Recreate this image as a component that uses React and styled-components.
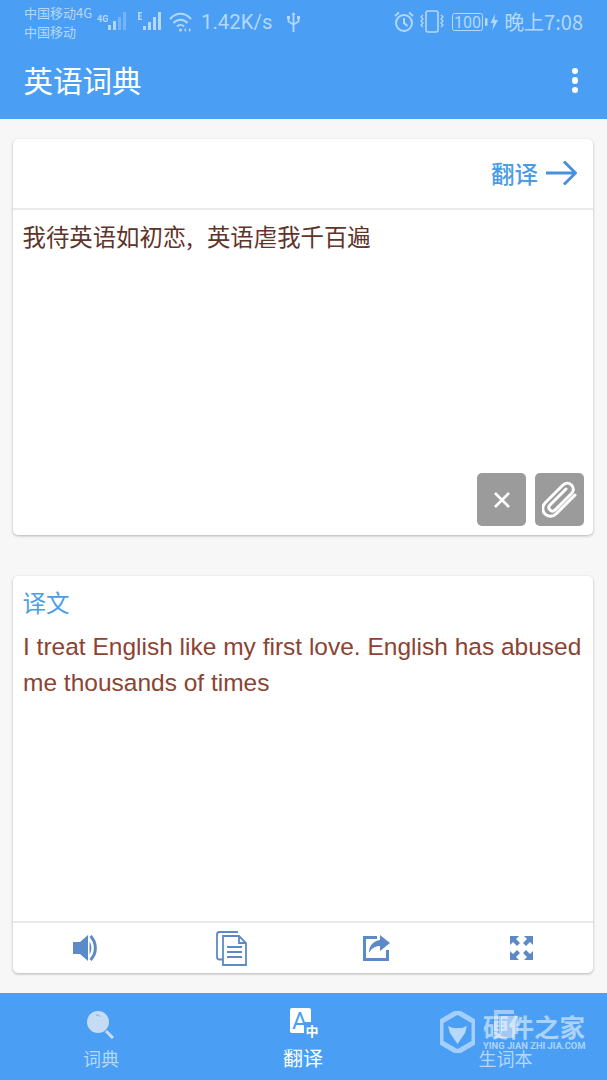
import React from 'react'
import styled, { createGlobalStyle } from 'styled-components'

const CJK = '"Noto Sans CJK SC", "Noto Sans", sans-serif'
const BLUE = '#4a9ff5'
const STATUS = '#b5d7fb'
const TOOL = '#5b8ac6'

const GlobalStyle = createGlobalStyle`
  html, body {
    margin: 0;
    padding: 0;
    background: #f7f7f7;
  }
  * {
    box-sizing: border-box;
  }
`

const Page = styled.div`
  position: relative;
  display: flex;
  flex-direction: column;
  width: 607px;
  height: 1080px;
  overflow: hidden;
  background: #f7f7f7;
  font-family: ${CJK};
`

const Header = styled.header`
  height: 119px;
  background: ${BLUE};
  display: flex;
  flex-direction: column;
`

const StatusBar = styled.div`
  height: 44px;
  padding: 0 24px;
  display: flex;
  justify-content: space-between;
  align-items: center;
  color: ${STATUS};
`

const StatusGroup = styled.div`
  display: flex;
  align-items: center;
`

const Carrier = styled.div`
  width: 73px;
  font-size: 13px;
  line-height: 19px;
  white-space: nowrap;
`

const StatusIcon = styled.svg`
  display: block;
  flex: none;
  margin-left: ${({ $gap }) => $gap}px;
`

const Speed = styled.span`
  margin-left: 9px;
  font: 20.4px Roboto, sans-serif;
  white-space: nowrap;
`

const Clock = styled.span`
  margin-left: 6px;
  font-size: 20px;
  line-height: 24px;
  white-space: nowrap;
`

const AppBar = styled.div`
  flex: 1;
  display: flex;
  justify-content: space-between;
  align-items: center;
  padding: 0 29px 0 23.5px;
  margin-top: -5px;
`

const AppTitle = styled.h1`
  margin: 0;
  font-size: 29.5px;
  font-weight: 400;
  line-height: 40px;
  color: #fff;
`

const MenuDots = styled.div`
  display: flex;
  flex-direction: column;
  gap: 3px;
  margin-top: 3px;

  i {
    display: block;
    width: 6.5px;
    height: 6.5px;
    border-radius: 50%;
    background: #fff;
  }
`

const Main = styled.main`
  flex: 1;
  padding: 20px 14px 20px 13px;
  display: flex;
  flex-direction: column;
  gap: 41px;
`

const Card = styled.section`
  height: ${({ $height }) => $height}px;
  background: #fff;
  border-radius: 5px;
  box-shadow: 0 1px 3px rgba(0, 0, 0, 0.28);
  display: flex;
  flex-direction: column;
`

const CardHead = styled.div`
  height: 71px;
  flex: none;
  border-bottom: 2px solid #e9e9e9;
  display: flex;
  justify-content: flex-end;
  align-items: center;
  padding: 0 16px 2px 0;
  gap: 8px;
`

const TranslateLabel = styled.span`
  font-size: 23.5px;
  font-weight: 500;
  color: #4a9be6;
`

const SourceBody = styled.div`
  flex: 1;
  display: flex;
  flex-direction: column;
  padding: 8px 9px 9px 9.5px;
`

const SourceText = styled.div`
  font-size: 23.4px;
  line-height: 36px;
  word-spacing: 9px;
  color: #5f3429;
  white-space: nowrap;
`

const ActionRow = styled.div`
  margin-top: auto;
  display: flex;
  justify-content: flex-end;
  gap: 9px;
`

const ActionButton = styled.div`
  width: 49px;
  height: 53px;
  border-radius: 5px;
  background: #9b9b9b;
  display: flex;
  align-items: center;
  justify-content: center;
`

const ResultBody = styled.div`
  flex: 1;
  padding: 8px 10px 0;
`

const ResultLabel = styled.div`
  font-size: 23.5px;
  line-height: 36px;
  margin-left: -0.5px;
  color: #4a9fe6;
`

const ResultText = styled.p`
  margin: 9px 0 0;
  font: 24.5px/36px "Liberation Sans", sans-serif;
  color: #8c4331;
`

const Toolbar = styled.div`
  height: 52px;
  flex: none;
  border-top: 2px solid #e9e9e9;
  display: grid;
  grid-template-columns: repeat(4, 145px);
  justify-content: center;
  justify-items: center;
  align-items: center;
`

const BottomNav = styled.nav`
  height: 87px;
  flex: none;
  background: ${BLUE};
  display: grid;
  grid-template-columns: 202px 202px 203px;
  justify-items: center;
`

const NavItem = styled.div`
  display: flex;
  flex-direction: column;
  align-items: center;
  padding-top: 14px;
  color: ${({ $active }) => ($active ? '#fff' : STATUS)};
  font-size: ${({ $active }) => ($active ? 20 : 18)}px;
  line-height: 26px;

  svg {
    display: block;
    margin-bottom: 6px;
  }
`

const Watermark = styled.div`
  position: absolute;
  left: 440px;
  top: 1011px;
  display: flex;
  align-items: flex-start;
  gap: 8px;
  color: rgba(255, 255, 255, 0.55);
`

const WatermarkText = styled.div`
  display: flex;
  flex-direction: column;
`

const WatermarkName = styled.span`
  font-size: 25.5px;
  font-weight: 700;
  line-height: 30px;
  white-space: nowrap;
`

const WatermarkSite = styled.span`
  font: 700 9.4px/12px Roboto, sans-serif;
  white-space: nowrap;
  margin-top: -1px;
`

function Signal({ dim = 0, gap }) {
  const bars = [
    [0, 5],
    [5, 9],
    [10, 13],
    [15, 18],
  ]
  return (
    <StatusIcon $gap={gap} width="19" height="24" viewBox="0 0 19 24" fill={STATUS}>
      {bars.map(([x, h], i) => (
        <rect key={x} x={x} y={20 - h} width="3" height={h} opacity={i >= 4 - dim ? 0.4 : 1} />
      ))}
    </StatusIcon>
  )
}

function StatusLeft() {
  return (
    <StatusGroup>
      <Carrier>
        中国移动4G
        <br />
        中国移动
      </Carrier>
      <StatusIcon $gap={0} width="11" height="24" viewBox="0 0 11 24">
        <text x="0" y="12" fontFamily="Roboto, sans-serif" fontWeight="700" fontSize="9" fill={STATUS}>4G</text>
      </StatusIcon>
      <Signal dim={2} gap={0} />
      <StatusIcon $gap={11} width="26" height="24" viewBox="0 0 26 24" fill={STATUS}>
        <rect x="0" y="2" width="1.500" height="8" />
        <rect x="0" y="2" width="4" height="1.500" />
        <rect x="0" y="5.300" width="3.500" height="1.400" />
        <rect x="0" y="8.500" width="4" height="1.500" />
        <rect x="5" y="16" width="3" height="4" />
        <rect x="10" y="12" width="3" height="8" />
        <rect x="15" y="7" width="3" height="13" />
        <rect x="20" y="2" width="3" height="18" />
      </StatusIcon>
      <StatusIcon $gap={5} width="23" height="22" viewBox="0 0 23 22" fill="none" stroke={STATUS} strokeWidth="2">
        <path d="M1 8c6-7 15-7 21 0" />
        <path d="M4.500 12c4-4.500 10-4.500 14 0" />
        <path d="M8 15.500c2-2 5-2 7 0" />
        <circle cx="11.500" cy="19" r="1.600" fill={STATUS} stroke="none" />
        <path d="M17 17l-2 2 2 2zM20 17l2 2-2 2z" fill={STATUS} stroke="none" />
      </StatusIcon>
      <Speed>1.42K/s</Speed>
      <StatusIcon $gap={13} width="15" height="22" viewBox="0 0 15 22" fill="none" stroke={STATUS} strokeWidth="1.800">
        <path d="M7.500 3v18" />
        <path d="M2.500 7v3.500l5 3 5-3V7" />
        <path d="M7.500 1l2 3h-4z" fill={STATUS} stroke="none" />
        <rect x="1" y="5" width="3" height="3" fill={STATUS} stroke="none" />
        <rect x="11" y="5" width="3" height="3" fill={STATUS} stroke="none" />
      </StatusIcon>
    </StatusGroup>
  )
}

function StatusRight() {
  return (
    <StatusGroup>
      <StatusIcon $gap={0} width="20" height="22" viewBox="0 0 20 22" fill="none" stroke={STATUS} strokeWidth="2">
        <circle cx="10" cy="12" r="8" />
        <path d="M10 7v5l3.500 3" />
        <path d="M1 5l4-3.500M19 5l-4-3.500" />
      </StatusIcon>
      <StatusIcon $gap={6} width="24" height="24" viewBox="0 0 24 24" fill="none" stroke={STATUS} strokeWidth="1.600">
        <rect x="6" y="1" width="12" height="21" rx="2" />
        <path d="M3 5l-2 2 2 2-2 2 2 2-2 2 2 2M21 5l2 2-2 2 2 2-2 2 2 2-2 2" strokeWidth="1.300" />
      </StatusIcon>
      <StatusIcon $gap={8} width="37" height="20" viewBox="0 0 37 20">
        <rect x="0.500" y="1.500" width="30" height="17" rx="2" fill="none" stroke={STATUS} />
        <text x="15.500" y="15.500" textAnchor="middle" fontFamily="Roboto, sans-serif" fontSize="16" fill={STATUS}>100</text>
        <rect x="33" y="6" width="2.500" height="8" rx="1" fill={STATUS} />
      </StatusIcon>
      <StatusIcon $gap={1} width="8" height="18" viewBox="0 0 8 18" fill={STATUS}>
        <path d="M5 1L0.500 10h3L2.500 17 8 7H4.500z" />
      </StatusIcon>
      <Clock>晚上7:08</Clock>
    </StatusGroup>
  )
}

function ToolIcon({ children }) {
  return (
    <svg width="36" height="36" viewBox="0 0 36 36" fill={TOOL}>
      {children}
    </svg>
  )
}

export default function App() {
  return (
    <Page>
      <GlobalStyle />
      <Header>
        <StatusBar>
          <StatusLeft />
          <StatusRight />
        </StatusBar>
        <AppBar>
          <AppTitle>英语词典</AppTitle>
          <MenuDots>
            <i />
            <i />
            <i />
          </MenuDots>
        </AppBar>
      </Header>

      <Main>
        <Card $height={396}>
          <CardHead>
            <TranslateLabel>翻译</TranslateLabel>
            <svg width="31" height="26" viewBox="0 0 31 26" fill="none" stroke="#4a8fdc" strokeWidth="3">
              <path d="M0 13h29" />
              <path d="M18 1.500L29.500 13 18 24.500" />
            </svg>
          </CardHead>
          <SourceBody>
            <SourceText>我待英语如初恋, 英语虐我千百遍</SourceText>
            <ActionRow>
              <ActionButton>
                <svg width="20" height="20" viewBox="0 0 20 20" stroke="#fff" strokeWidth="2.600">
                  <path d="M3 3l14 14M17 3L3 17" />
                </svg>
              </ActionButton>
              <ActionButton>
                <svg width="36" height="38" viewBox="0 0 36 38" fill="none" stroke="#fff" strokeWidth="3" strokeLinecap="round">
                  <path d="M33 14L14.500 32.500c-3.500 3.500-8.500 3.500-11.500 0.500s-3-8 0.500-11.500L21 4c2.500-2.500 6-2.500 8.500 0s2.500 6 0 8.500L13 29c-1.500 1.500-3.500 1.500-5 0s-1.500-3.500 0-5L24 8" />
                </svg>
              </ActionButton>
            </ActionRow>
          </SourceBody>
        </Card>

        <Card $height={397}>
          <ResultBody>
            <ResultLabel>译文</ResultLabel>
            <ResultText>I treat English like my first love. English has abused me thousands of times</ResultText>
          </ResultBody>
          <Toolbar>
            <ToolIcon>
              <path d="M5 12h7l8-7v26l-8-7H5z" />
              <path d="M21.500 11.500c2.500 4 2.500 9 0 13z" />
              <path d="M22.500 6c6.500 7 6.500 17 0 24" fill="none" stroke={TOOL} strokeWidth="3" />
            </ToolIcon>
            <ToolIcon>
              <g fill="none" stroke={TOOL} strokeWidth="1.800">
                <path d="M25 2H6.500C4.500 2 4 3 4 4.500V27c0 1.500 1 2.500 2.500 2.500H10" />
                <path d="M10 6h16l7 7v22H10z" fill="#fff" />
                <path d="M26 6v7h7" />
                <path d="M14 17h15M14 22h15M14 27h15" strokeWidth="2" />
              </g>
            </ToolIcon>
            <ToolIcon>
              <path d="M5 6h14v3H8v19h20v-8h3v11H5z" />
              <path d="M22 5l10 8-10 8v-5c-5 0-8 2-11 7 0-7 4-12 11-13z" />
            </ToolIcon>
            <ToolIcon>
              <path d="M7 6h9l-3 3 4 4-3 3-4-4-3 3zM30 6v9l-3-3-4 4-3-3 4-4-3-3zM7 30v-9l3 3 4-4 3 3-4 4 3 3zM30 30h-9l3-3-4-4 3-3 4 4 3-3z" />
            </ToolIcon>
          </Toolbar>
        </Card>
      </Main>

      <BottomNav>
        <NavItem>
          <svg width="32" height="32" viewBox="0 0 32 32">
            <circle cx="13" cy="15" r="11" fill="#c6dcf4" />
            <path d="M11 8c2 0 3.500 0.500 4 1.500" stroke={BLUE} fill="none" strokeWidth="0.800" />
            <path d="M21 24l7 7" stroke="#c6dcf4" strokeWidth="3" />
          </svg>
          词典
        </NavItem>
        <NavItem $active>
          <svg width="32" height="32" viewBox="0 0 32 32">
            <rect x="3" y="1" width="21" height="25" rx="2" fill="#fff" />
            <text x="5" y="22" fontFamily="Roboto, sans-serif" fontSize="24" fill={BLUE}>A</text>
            <rect x="17" y="15" width="15" height="17" fill={BLUE} />
            <text x="25" y="29" textAnchor="middle" fontFamily={CJK} fontWeight="700" fontSize="13" fill="#fff">中</text>
          </svg>
          翻译
        </NavItem>
        <NavItem>
          <svg width="32" height="32" viewBox="0 0 32 32" fill="#c6dcf4">
            <path d="M4 3h20v4H8v20h16v4H4z" opacity="0.7" />
            <rect x="11" y="9" width="17" height="18" opacity="0.7" />
          </svg>
          生词本
        </NavItem>
      </BottomNav>

      <Watermark>
        <svg width="35" height="42" viewBox="0 0 35 42">
          <path d="M17.500 1L34 10.500v21L17.500 41 1 31.500v-21z" fill="none" stroke="rgba(255,255,255,0.5)" strokeWidth="5" />
          <path d="M8 15l5 2h9l5-2-2 7-7.500 11L10 22z" fill="rgba(255,255,255,0.6)" />
        </svg>
        <WatermarkText>
          <WatermarkName>硬件之家</WatermarkName>
          <WatermarkSite>YING JIAN ZHI JIA.COM</WatermarkSite>
        </WatermarkText>
      </Watermark>
    </Page>
  )
}
